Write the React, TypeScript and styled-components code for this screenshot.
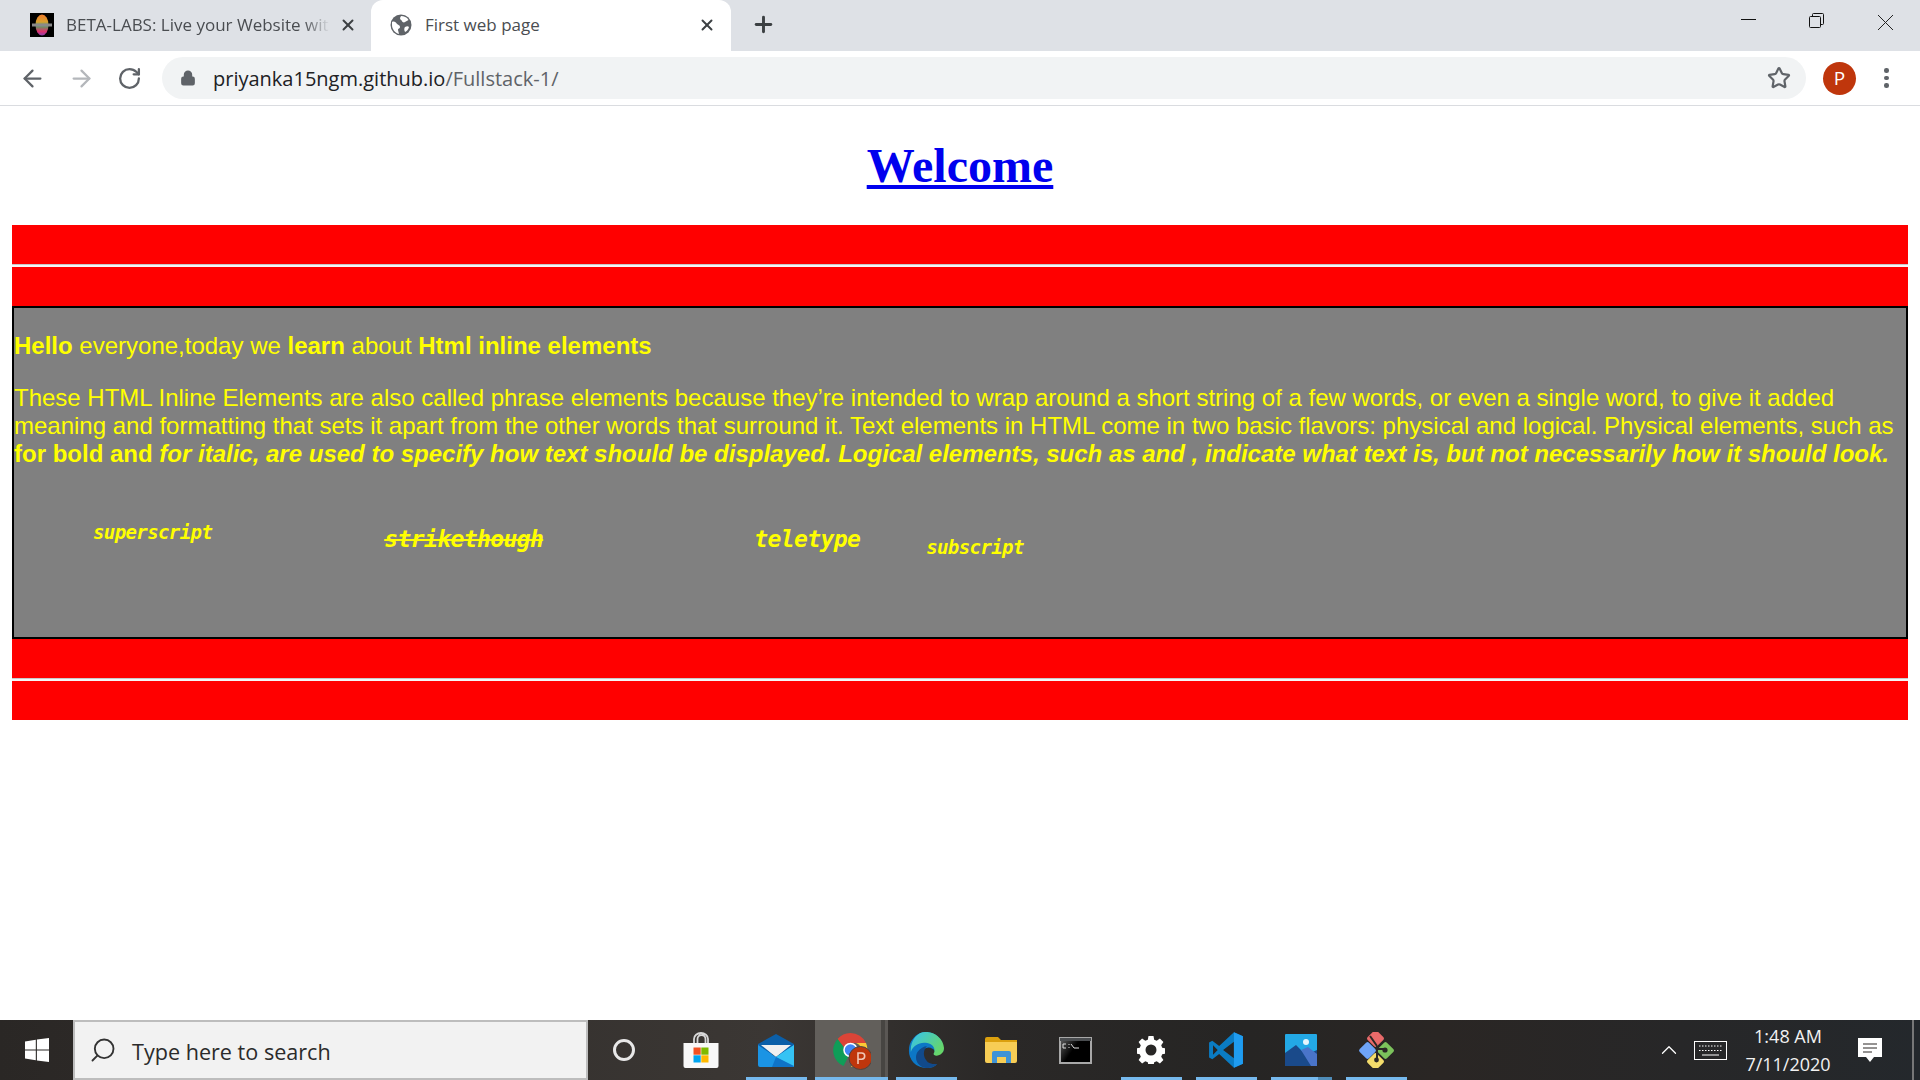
import React from 'react';
import styled, { createGlobalStyle } from 'styled-components';
import { ArrowLeft, ArrowRight, RotateCw, Star, X, Plus, Lock, Search, ChevronUp } from 'lucide-react';

const GlobalStyle = createGlobalStyle`
    html, body {
        margin: 0;
        padding: 0;
        height: 100%;
        background: #fff;
        overflow: hidden;
    }
    #root {
        height: 100%;
    }
`;

const Screen = styled.div`
    width: 1920px;
    height: 1080px;
    display: flex;
    flex-direction: column;
    font-family: 'Open Sans', 'Noto Sans', sans-serif;
`;

const TabStrip = styled.div`
    height: 51px;
    flex: none;
    display: flex;
    background: #dee1e6;
`;

const Tab = styled.div<{ $active?: boolean }>`
    width: ${(p) => (p.$active ? '360px' : '363px')};
    margin-left: ${(p) => (p.$active ? '0' : '8px')};
    padding: 0 ${(p) => (p.$active ? '15px' : '14px')} 2px ${(p) => (p.$active ? '19px' : '22px')};
    box-sizing: border-box;
    display: flex;
    align-items: center;
    border-radius: 12px 12px 0 0;
    background: ${(p) => (p.$active ? '#fff' : 'transparent')};
`;

const TabTitle = styled.span<{ $active?: boolean }>`
    flex: 1;
    margin-left: ${(p) => (p.$active ? '13px' : '12px')};
    margin-right: ${(p) => (p.$active ? '0' : '9px')};
    font-size: 17px;
    white-space: nowrap;
    color: #4a4d51;
    -webkit-mask-image: ${(p) => (p.$active ? 'none' : 'linear-gradient(to right, #000 90%, transparent 100%)')};
    mask-image: ${(p) => (p.$active ? 'none' : 'linear-gradient(to right, #000 90%, transparent 100%)')};
`;

const NewTab = styled.div`
    width: 32px;
    margin-left: 16px;
    padding-bottom: 2px;
    display: flex;
    align-items: center;
    justify-content: center;
    color: #3c4043;
`;

const WindowButtons = styled.div`
    margin-left: auto;
    display: flex;
    padding-right: 27px;
    gap: 53px;
    padding-top: 13px;
`;

const CloseSlot = styled.span`
    margin-left: 1px;
    height: 15px;
`;

const Toolbar = styled.div`
    height: 55px;
    flex: none;
    box-sizing: border-box;
    display: flex;
    align-items: center;
    background: #fff;
    border-bottom: 1px solid #dadce0;
    padding-left: 19px;
    color: #5f6368;
`;

const NavButtons = styled.div`
    display: flex;
    align-items: center;
    gap: 22px;
    width: 143px;
`;

const Omnibox = styled.div`
    width: 1644px;
    height: 42px;
    margin-bottom: 1px;
    border-radius: 21px;
    background: #f1f3f4;
    display: flex;
    align-items: center;
    padding: 0 15px 0 18px;
    box-sizing: border-box;
`;

const Url = styled.div`
    flex: 1;
    margin-left: 17px;
    padding-top: 2px;
    font-size: 20px;
    color: #202124;
`;

const UrlPath = styled.span`
    color: #5f6368;
`;

const Avatar = styled.div`
    width: 33px;
    height: 33px;
    margin-left: 17px;
    border-radius: 50%;
    background: #bf360c;
    color: #fff;
    font-size: 19px;
    display: flex;
    align-items: center;
    justify-content: center;
`;

const MenuDots = styled.div`
    margin-left: 28px;
    display: flex;
    flex-direction: column;
    gap: 3px;
`;

const Dot = styled.span`
    width: 4.5px;
    height: 4.5px;
    border-radius: 50%;
    background: #5f6368;
`;

const Page = styled.main`
    flex: 1;
    background: #fff;
    padding: 0 12px;
`;

const Heading = styled.h1`
    margin: 0;
    height: 119px;
    box-sizing: border-box;
    padding-top: 32px;
    text-align: center;
    font-family: 'Liberation Serif', serif;
    font-size: 48px;
    line-height: 55px;
    font-weight: 700;
    color: #0000ee;
    text-decoration: underline;
`;

const RedBand = styled.div`
    height: 81px;
    background: #f00;
    display: flex;
    align-items: center;
`;

const Rule = styled.hr`
    width: 100%;
    height: 3px;
    margin: 0;
    border: 0;
    background: linear-gradient(#c9c9c9 34%, #f6f6f6 34%);
`;

const Panel = styled.section`
    height: 333px;
    box-sizing: border-box;
    border: 2px solid #000;
    background: #808080;
    color: #ff0;
    font-family: 'Liberation Sans', Arial, sans-serif;
    font-size: 24px;
    line-height: 28px;
    padding-top: 24px;
`;

const Intro = styled.p`
    margin: 0 0 24px;
`;

const Body = styled.p`
    margin: 0;
`;

const CodeRow = styled.div`
    margin-top: 50px;
    font-family: 'DejaVu Sans Mono', monospace;
    font-weight: 700;
    font-style: italic;
    line-height: 28px;
    white-space: nowrap;
`;

const Code = styled.span<{ $left: number; $size: number; $shift?: number }>`
    display: inline-block;
    margin-left: ${(p) => p.$left}px;
    font-size: ${(p) => p.$size}px;
    letter-spacing: -0.6px;
    vertical-align: ${(p) => p.$shift ?? 0}px;
`;

const Strike = styled(Code)`
    text-decoration: line-through;
`;

const Taskbar = styled.footer`
    height: 60px;
    flex: none;
    display: flex;
    align-items: stretch;
    background: linear-gradient(90deg, #2a2725 0%, #3b3734 40%, #2a2827 52%, #262524 65%, #2a2624 75%, #24282c 100%);
    color: #fff;
`;

const StartButton = styled.div`
    width: 73px;
    display: flex;
    align-items: center;
    justify-content: center;
`;

const SearchBox = styled.div`
    width: 515px;
    box-sizing: border-box;
    background: #f2f2f2;
    border: 2px solid #bdbdbd;
    display: flex;
    align-items: center;
    padding-left: 14px;
    color: #333;
`;

const SearchIcon = styled(Search)`
    transform: scaleX(-1);
`;

const SearchText = styled.span`
    margin-left: 15px;
    padding-top: 2px;
    font-size: 21.6px;
    color: #2b2b2b;
`;

const Slot = styled.div<{ $open?: boolean; $active?: boolean; $split?: boolean }>`
    position: relative;
    width: 75px;
    flex: none;
    display: flex;
    align-items: center;
    justify-content: center;

    &::before {
        content: '';
        position: absolute;
        top: 0;
        bottom: 0;
        left: 2px;
        right: 0;
        background: ${(p) =>
            p.$active
                ? 'linear-gradient(90deg, #625f5b 0 66px, #474542 66px 70px, #5a5754 70px)'
                : 'transparent'};
    }

    &::after {
        content: '';
        position: absolute;
        left: ${(p) => (p.$active ? '2px' : '8px')};
        right: ${(p) => (p.$active ? '0' : '6px')};
        bottom: 0;
        height: 3px;
        background: ${(p) =>
            !p.$open
                ? 'transparent'
                : p.$split
                  ? 'linear-gradient(90deg, #76b9ed 0 47px, #4f8cb8 47px)'
                  : '#76b9ed'};
    }

    & > svg {
        position: relative;
        z-index: 1;
    }
`;

const CortanaRing = styled.svg`
    margin-right: 4px;
`;

const Tray = styled.div`
    margin-left: auto;
    display: flex;
    align-items: center;
    padding-right: 6px;
`;

const TrayGap = styled.span`
    width: 12px;
`;

const Clock = styled.div`
    width: 112px;
    margin-left: 5px;
    text-align: center;
    font-size: 18px;
    line-height: 28px;
    color: #f2f2f2;
`;

const Notice = styled.div`
    width: 70px;
    height: 100%;
    box-sizing: border-box;
    padding-left: 14px;
    display: flex;
    align-items: center;
    border-right: 2px solid #777;
`;

const BetaIcon = () => (
    <svg width="24" height="24" viewBox="0 0 24 24">
        <defs>
            <linearGradient id="beta" x1="0" y1="0" x2="0" y2="1">
                <stop offset="0" stopColor="#f07a2a" />
                <stop offset="0.35" stopColor="#d8a030" />
                <stop offset="0.55" stopColor="#5aa060" />
                <stop offset="0.8" stopColor="#e0306a" />
                <stop offset="1" stopColor="#8a3fb0" />
            </linearGradient>
        </defs>
        <rect width="24" height="24" fill="#000" />
        <ellipse cx="12" cy="12" rx="6.5" ry="10.5" fill="url(#beta)" />
        <rect x="2" y="10.5" width="20" height="3" fill="#8a8a8a" />
    </svg>
);

const GlobeFilled = () => (
    <svg width="22" height="22" viewBox="0 0 22 22">
        <circle cx="11" cy="11" r="10.5" fill="#5f6368" />
        <path d="M2 8c2-1 4 0 5 2 1 1 3 1 3 3s-2 1-2 3l1 4C5 19 2 15 2 11Z" fill="#fff" />
        <path d="M11 2c3 0 6 1 7.5 4L15 8c-1 1-3 0-3-1s-2-1-2-3Z" fill="#fff" />
        <path d="M15 13c2-1 3-1 4 0-1 3-2 4-4 5-1-2-1-4 0-5Z" fill="#fff" />
    </svg>
);

const WinLogo = () => (
    <svg width="24" height="24" viewBox="0 0 24 24" fill="#fff">
        <path d="M0 3.4 10.8 1.8V11.4H0ZM11.9 1.6 24 0V11.4H11.9ZM0 12.6H10.8V22.2L0 20.6ZM11.9 12.6H24V24L11.9 22.4Z" />
    </svg>
);

const StoreIcon = () => (
    <svg width="36" height="36" viewBox="0 0 36 36">
        <path d="M11 12V7a7 6 0 0 1 14 0v5M14.5 12V7a4 4 0 0 1 8 0v5" fill="none" stroke="#d8d8d8" strokeWidth="1.8" />
        <path d="M0.5 11H35.5V34a2 2 0 0 1-2 2H2.5a2 2 0 0 1-2-2Z" fill="#f8f8f8" />
        <rect x="10.5" y="15.5" width="7.2" height="7.2" fill="#f25022" />
        <rect x="18.3" y="15.5" width="7.2" height="7.2" fill="#7fba00" />
        <rect x="10.5" y="23.3" width="7.2" height="7.2" fill="#00a4ef" />
        <rect x="18.3" y="23.3" width="7.2" height="7.2" fill="#ffb900" />
    </svg>
);

const MailIcon = () => (
    <svg width="36" height="33" viewBox="0 0 36 33">
        <path d="M0 10 18 0 36 10V20H0Z" fill="#0b5fa8" />
        <path d="M3 11H33L18 23Z" fill="#f0f0f0" />
        <path d="M0 11 18 23 36 11V31a2 2 0 0 1-2 2H2a2 2 0 0 1-2-2Z" fill="#1b94e4" />
        <path d="M36 11 18 23 36 33Z" fill="#35c3f4" />
        <path d="M18 23 36 32a2 2 0 0 1-2 1H14Z" fill="#0f74c8" />
    </svg>
);

const ChromeIcon = () => (
    <svg width="40" height="40" viewBox="0 0 40 40">
        <path d="M19.5 3A17 17 0 0 1 35 13H19.5a7 7 0 0 0-6.5 4.5L6.5 9A17 17 0 0 1 19.5 3Z" fill="#db4437" />
        <path d="M6.5 9l6.5 8.5a7 7 0 0 0 4.5 9L12.5 36A17 17 0 0 1 6.5 9Z" fill="#0f9d58" />
        <path d="M35 13a17 17 0 0 1-15 24l6-11a7 7 0 0 0-1-13Z" fill="#fcc934" />
        <circle cx="19.5" cy="20" r="6.5" fill="#4285f4" stroke="#fff" strokeWidth="1.5" />
        <circle cx="29.5" cy="28" r="11.5" fill="#bf360c" stroke="#4a4744" strokeWidth="1" />
        <path d="M27 34V23h3.6a3 3 0 0 1 0 6.2H27" fill="none" stroke="#f0c8b8" strokeWidth="1.6" />
    </svg>
);

const EdgeIcon = () => (
    <svg width="36" height="36" viewBox="0 0 38 38">
        <defs>
            <linearGradient id="edge" x1="0" y1="0" x2="1" y2="0.6">
                <stop offset="0" stopColor="#35c1f1" />
                <stop offset="1" stopColor="#66d66a" />
            </linearGradient>
        </defs>
        <path d="M18 0A19 19 0 0 0 1 19a18 18 0 0 0 18 19 16 16 0 0 0 12-4 11 11 0 0 1-10 0C14 30 13 22 17 18a8 8 0 0 1 12 3h8A18 18 0 0 0 18 0Z" fill="#0c77c6" />
        <path d="M18 0A19 19 0 0 1 38 17c0 5-4 8-8 8-2 0-3-1-3-2 2-3 1-8-3-10C15 9 6 13 3 21 2 9 10 0 18 0Z" fill="url(#edge)" />
        <path d="M19 38C10 37 6 28 10 21c3-4 7-6 10-6-4 4-5 11 1 17 3 2 7 2 10 2a16 16 0 0 1-12 4Z" fill="#114a8b" />
    </svg>
);

const FolderIcon = () => (
    <svg width="32" height="26" viewBox="0 0 32 26">
        <path d="M0 2a2 2 0 0 1 2-2H13l3 3H32V7H0Z" fill="#dba00e" />
        <path d="M0 5H32V24a2 2 0 0 1-2 2H2a2 2 0 0 1-2-2Z" fill="#f7cd55" />
        <path d="M7 26V16a2 2 0 0 1 2-2H24a2 2 0 0 1 2 2V26H21V20H12V26Z" fill="#3f93d6" />
    </svg>
);

const CmdIcon = () => (
    <svg width="33" height="27" viewBox="0 0 33 27">
        <defs>
            <linearGradient id="cmd" x1="0" y1="0" x2="1" y2="0.5">
                <stop offset="0" stopColor="#555" />
                <stop offset="0.5" stopColor="#000" />
            </linearGradient>
        </defs>
        <rect width="33" height="27" fill="#a8a8a8" />
        <rect x="1" y="1" width="31" height="3" fill="#4a4d50" />
        <rect x="2" y="4" width="29" height="21" fill="url(#cmd)" />
        <path d="M7 7H4V11H7M10 7V8M10 10V11M12 7 15 11H20" stroke="#ddd" strokeWidth="1" fill="none" />
    </svg>
);

const GearIcon = () => (
    <svg width="28" height="28" viewBox="0 0 28 28">
        <path
            fill="#fff"
            fillRule="evenodd"
            d="M11.5 0h5l.7 3.8 2.5 1 3.2-2.2 3.5 3.5-2.2 3.2 1 2.5 3.8.7v5l-3.8.7-1 2.500 2.2 3.2-3.5 3.5-3.2-2.2-2.5 1-.7 3.8h-5l-.7-3.8-2.5-1-3.2 2.2-3.5-3.5 2.2-3.2-1-2.5-3.8-.7v-5l3.8-.7 1-2.5-2.2-3.2 3.5-3.5 3.2 2.2 2.5-1ZM14 8.5a5.5 5.5 0 1 0 0 11 5.5 5.5 0 0 0 0-11Z"
        />
    </svg>
);

const CodeIcon = () => (
    <svg width="36" height="36" viewBox="0 0 100 100">
        <path
            fill="#0a7cc4"
            fillRule="evenodd"
            d="M72 1 97 12V88L72 99 31 61 12 76 3 71V29L12 24 31 39ZM72 27 42 50 72 73ZM14 37V63L27 50Z"
        />
        <path fill="#1f9cf0" d="M72 1 97 12V88L72 99Z" />
    </svg>
);

const PhotosIcon = () => (
    <svg width="32" height="32" viewBox="0 0 32 32">
        <rect width="32" height="32" rx="1" fill="#23a9e6" />
        <circle cx="21" cy="8" r="3" fill="#e6f6fd" />
        <path d="M0 32V19L11 11 21 21 32 16V32Z" fill="#1a4a8a" />
        <path d="M16 16 23 13 32 20V32H26Z" fill="#4a74c9" />
    </svg>
);

const GitIcon = () => (
    <svg width="36" height="36" viewBox="0 0 36 36">
        <rect x="11" y="0" width="13" height="13" rx="2" transform="rotate(45 17.5 6.5)" fill="#e86a6a" />
        <rect x="3" y="12" width="13" height="13" rx="2" transform="rotate(45 9.5 18.5)" fill="#6ea4f7" />
        <rect x="21" y="12" width="13" height="13" rx="2" transform="rotate(45 27.5 18.5)" fill="#7cc25c" />
        <rect x="11" y="23" width="13" height="13" rx="2" transform="rotate(45 17.5 29.5)" fill="#f3dc6b" />
        <path d="M12 4 19 14M19 14V28M19 17 27 17" stroke="#2a2725" strokeWidth="2" fill="none" />
        <circle cx="18.5" cy="28" r="2.4" fill="#2a2725" />
        <circle cx="27" cy="18" r="2.6" fill="#2a2725" />
    </svg>
);

const KeyboardIcon = () => (
    <svg width="33" height="19" viewBox="0 0 33 19" fill="none" stroke="#fff">
        <rect x="0.5" y="0.5" width="32" height="18" />
        <path d="M5 5H28M5 9.5H28" strokeWidth="1" strokeDasharray="1.5 1.5" />
        <path d="M8 14H25" strokeWidth="1" />
    </svg>
);

const NoticeIcon = () => (
    <svg width="24" height="24" viewBox="0 0 24 24">
        <path d="M0 0H24V19H16L12 24 8 19H0Z" fill="#fff" />
        <path d="M5 6H19M5 10H19M5 14H14" stroke="#2a2725" strokeWidth="1" />
    </svg>
);

const RestoreIcon = () => (
    <svg width="15" height="15" viewBox="0 0 15 15" fill="none" stroke="#111">
        <rect x="0.5" y="3.5" width="11" height="11" rx="1" />
        <path d="M3.5 3.5V1.5a1 1 0 0 1 1-1h9a1 1 0 0 1 1 1v9a1 1 0 0 1-1 1h-2" />
    </svg>
);

const MinimizeIcon = () => (
    <svg width="15" height="15" viewBox="0 0 15 15" fill="none" stroke="#111">
        <path d="M0 6.5H15" />
    </svg>
);

const CloseIcon = () => (
    <svg width="15" height="15" viewBox="0 0 15 15" fill="none" stroke="#222">
        <path d="M0 0 15 15M15 0 0 15" />
    </svg>
);

const App = () => {
    return (
        <Screen>
            <GlobalStyle />
            <TabStrip>
                <Tab>
                    <BetaIcon />
                    <TabTitle>BETA-LABS: Live your Website wit</TabTitle>
                    <X size={18} strokeWidth={2.6} color="#3c4043" />
                </Tab>
                <Tab $active>
                    <GlobeFilled />
                    <TabTitle $active>First web page</TabTitle>
                    <X size={18} strokeWidth={2.6} color="#3c4043" />
                </Tab>
                <NewTab>
                    <Plus size={25} strokeWidth={2.8} />
                </NewTab>
                <WindowButtons>
                    <MinimizeIcon />
                    <RestoreIcon />
                    <CloseSlot>
                        <CloseIcon />
                    </CloseSlot>
                </WindowButtons>
            </TabStrip>
            <Toolbar>
                <NavButtons>
                    <ArrowLeft size={27} strokeWidth={2} />
                    <ArrowRight size={27} strokeWidth={2} color="#b4b7bb" />
                    <RotateCw size={25} strokeWidth={2.2} />
                </NavButtons>
                <Omnibox>
                    <Lock size={16} strokeWidth={2.6} fill="#5f6368" />
                    <Url>
                        priyanka15ngm.github.io<UrlPath>/Fullstack-1/</UrlPath>
                    </Url>
                    <Star size={24} strokeWidth={2.2} />
                </Omnibox>
                <Avatar>P</Avatar>
                <MenuDots>
                    <Dot />
                    <Dot />
                    <Dot />
                </MenuDots>
            </Toolbar>
            <Page>
                <Heading>Welcome</Heading>
                <RedBand>
                    <Rule />
                </RedBand>
                <Panel>
                    <Intro>
                        <b>Hello</b> everyone,today we <b>learn</b> about <b>Html inline elements</b>
                    </Intro>
                    <Body>
                        These HTML Inline Elements are also called phrase elements because they’re intended to
                        wrap around a short string of a few words, or even a single word, to give it added meaning
                        and formatting that sets it apart from the other words that surround it. Text elements in
                        HTML come in two basic flavors: physical and logical. Physical elements, such as{' '}
                        <b>
                            for bold and{' '}
                            <i>
                                for italic, are used to specify how text should be displayed. Logical elements, such
                                as and , indicate what text is, but not necessarily how it should look.
                            </i>
                        </b>
                    </Body>
                    <CodeRow>
                        <Code $left={79} $size={19} $shift={8}>
                            superscript
                        </Code>
                        <Strike $left={172} $size={23}>
                            strikethough
                        </Strike>
                        <Code $left={211} $size={23}>
                            teletype
                        </Code>
                        <Code $left={66} $size={19} $shift={-7}>
                            subscript
                        </Code>
                    </CodeRow>
                </Panel>
                <RedBand>
                    <Rule />
                </RedBand>
            </Page>
            <Taskbar>
                <StartButton>
                    <WinLogo />
                </StartButton>
                <SearchBox>
                    <SearchIcon size={28} strokeWidth={1.6} />
                    <SearchText>Type here to search</SearchText>
                </SearchBox>
                <Slot>
                    <CortanaRing width="24" height="24" viewBox="0 0 24 24" fill="none" stroke="#e8e8e8" strokeWidth="3">
                        <circle cx="12" cy="12" r="9.5" />
                    </CortanaRing>
                </Slot>
                <Slot>
                    <StoreIcon />
                </Slot>
                <Slot $open>
                    <MailIcon />
                </Slot>
                <Slot $open $active>
                    <ChromeIcon />
                </Slot>
                <Slot $open>
                    <EdgeIcon />
                </Slot>
                <Slot>
                    <FolderIcon />
                </Slot>
                <Slot>
                    <CmdIcon />
                </Slot>
                <Slot $open>
                    <GearIcon />
                </Slot>
                <Slot $open>
                    <CodeIcon />
                </Slot>
                <Slot $open $split>
                    <PhotosIcon />
                </Slot>
                <Slot $open>
                    <GitIcon />
                </Slot>
                <Tray>
                    <ChevronUp size={26} strokeWidth={1.2} />
                    <TrayGap />
                    <KeyboardIcon />
                    <Clock>
                        1:48 AM
                        <br />
                        7/11/2020
                    </Clock>
                    <Notice>
                        <NoticeIcon />
                    </Notice>
                </Tray>
            </Taskbar>
        </Screen>
    );
};

export default App;
